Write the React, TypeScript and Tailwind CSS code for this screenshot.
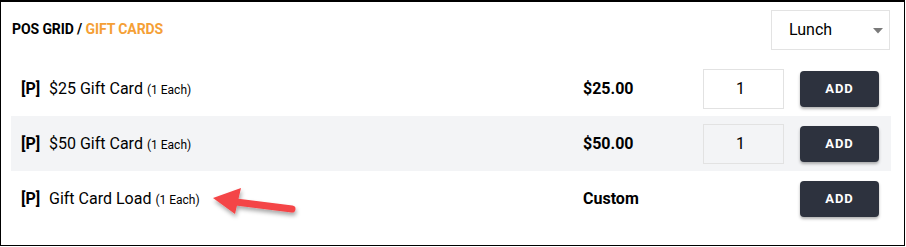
import React from "react";

type Item = {
  name: string;
  price: string;
  qty?: boolean;
  shaded?: boolean;
};

const items: Item[] = [
  { name: "$25 Gift Card", price: "$25.00", qty: true },
  { name: "$50 Gift Card", price: "$50.00", qty: true, shaded: true },
  { name: "Gift Card Load", price: "Custom" },
];

export default function App() {
  return (
    <div className="relative h-[247px] w-[906px] bg-white font-['Roboto',sans-serif] text-black">
      <div className="h-[246px] w-[905px] border border-t-2 border-black">
        <div className="flex h-[48px] items-end justify-between pl-[11px] pr-[14px]">
          <div className="mb-[10px] text-[14px] font-bold uppercase tracking-[-0.1px]">
            POS GRID / <span className="text-[#f5a036]">Gift Cards</span>
          </div>
          <div className="flex h-[40px] w-[119px] items-center justify-between border border-[#e3e3e3] pl-[17px] pr-[6px] text-[16px]">
            <span>Lunch</span>
            <svg width="10" height="6" viewBox="0 0 10 6" className="mt-[2px]">
              <path d="M0 0h10L5 5.5z" fill="#7a7a7a" />
            </svg>
          </div>
        </div>

        <div className="ml-[10px] mr-[13px] mt-[11px] flex flex-col">
          {items.map((item) => (
            <Row key={item.name} item={item} />
          ))}
        </div>
      </div>

      <ArrowMark />
    </div>
  );
}

function Row({ item }: { item: Item }) {
  return (
    <div
      className={`flex h-[55px] items-center pl-[10px] pr-[12px] ${
        item.shaded ? "bg-[#f3f4f6]" : "bg-white"
      }`}
    >
      <div className="flex flex-1 items-baseline">
        <span className="w-[28px] text-[16px] font-bold">[P]</span>
        <span className="text-[16px]">{item.name}</span>
        <span className="ml-[4px] text-[12px]">(1 Each)</span>
      </div>
      <div className="w-[120px] text-[16px] font-bold">{item.price}</div>
      {item.qty ? (
        <div className="flex h-[40px] w-[81px] items-center justify-center border border-[#e2e2e2] pr-[6px] text-[16px]">
          1
        </div>
      ) : (
        <div className="w-[81px]" />
      )}
      <button
        type="button"
        className="ml-[16px] flex h-[36px] w-[79px] items-center justify-center rounded-[4px] bg-[#2d323e] text-[13px] font-bold tracking-[1px] text-white shadow-[0_2px_3px_rgba(0,0,0,0.3)]"
      >
        ADD
      </button>
    </div>
  );
}

function ArrowMark() {
  return (
    <svg
      className="pointer-events-none absolute left-0 top-0"
      width="906"
      height="247"
      viewBox="0 0 906 247"
    >
      <defs>
        <filter id="sh" x="-20%" y="-50%" width="140%" height="200%">
          <feDropShadow dx="1" dy="3" stdDeviation="2" floodColor="#000" floodOpacity="0.35" />
        </filter>
      </defs>
      <g filter="url(#sh)" fill="#f44546">
        <line x1="236" y1="202" x2="292" y2="209" stroke="#f44546" strokeWidth="7" strokeLinecap="round" />
        <path d="M213 198L241 188L235 214Z" />
      </g>
    </svg>
  );
}
